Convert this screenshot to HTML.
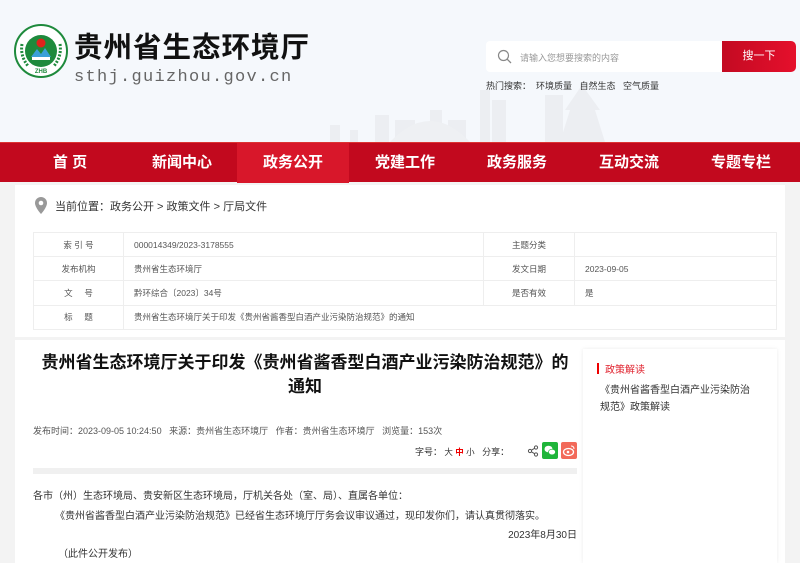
<!DOCTYPE html>
<html><head><meta charset="utf-8"><style>
*{margin:0;padding:0;box-sizing:border-box}
body{width:800px;height:563px;overflow:hidden;background:#f3f3f3;font-family:"Liberation Sans","Noto Sans CJK SC",sans-serif;position:relative;color:#333}
.a{position:absolute}
.hdr{left:0;top:0;width:800px;height:142px;background:#f5f8fc}
.nav{left:0;top:142px;width:800px;height:40px;background:#c2091e;border-top:1px solid #d33;}
.nav span{position:absolute;top:0;width:112px;height:40px;line-height:40px;text-align:center;color:#fff;font-weight:bold;font-size:15px}
.card{background:#fff}
table{border-collapse:collapse;font-size:8.5px;color:#555}
td{border:1px solid #eee;height:24.2px;padding-left:10px}
td.l{text-align:center;padding:0}
.p{font-size:10px;color:#333}
</style></head><body>
<div class="a hdr"></div>
<svg class="a" style="left:320px;top:70px" width="300" height="72">
<g fill="#eceef2">
<rect x="10" y="55" width="10" height="17"/><rect x="30" y="60" width="8" height="12"/><rect x="55" y="45" width="14" height="27"/><rect x="75" y="50" width="20" height="22"/><rect x="110" y="40" width="12" height="32"/><rect x="128" y="50" width="18" height="22"/><rect x="160" y="20" width="10" height="52"/><rect x="172" y="30" width="14" height="42"/><rect x="225" y="25" width="18" height="47"/>
<path d="M240 72 L250 40 L275 40 L285 72Z"/><path d="M245 40 L262 15 L280 40Z"/>
</g>
<path d="M70 72 Q110 30 150 72Z" fill="#eef0f3"/>
</svg>
<svg class="a" style="left:14px;top:24px" width="54" height="54" viewBox="0 0 54 54">
<circle cx="27" cy="27" r="26" fill="#fff" stroke="#1e8a3c" stroke-width="2"/>
<circle cx="27" cy="27" r="16" fill="#1e8a3c"/>
<circle cx="27" cy="19" r="4.5" fill="#e0231c"/>
<path d="M17 33 L23 25 L27 30 L31 24 L37 33Z" fill="#3aa0d8"/>
<rect x="18" y="33" width="18" height="3" fill="#fff"/>
<path d="M8 20 Q6 32 14 42 M46 20 Q48 32 40 42" stroke="#1e8a3c" stroke-width="3" fill="none" stroke-dasharray="2 1.5"/>
<text x="27" y="49" font-size="6" font-weight="bold" fill="#1e8a3c" text-anchor="middle" font-family="Liberation Sans">ZHB</text>
</svg>
<div class="a" style="left:74px;top:30px;font-size:28.5px;font-weight:bold;color:#111;letter-spacing:1px;line-height:36px">贵州省生态环境厅</div>
<div class="a" style="left:74px;top:68px;font-size:17px;color:#666;font-family:'Liberation Mono',monospace;letter-spacing:1.3px">sthj.guizhou.gov.cn</div>
<div class="a" style="left:486px;top:41px;width:236px;height:31px;background:#fff;border-radius:4px 0 0 4px"></div>
<svg class="a" style="left:497px;top:49px" width="15" height="15"><circle cx="6.5" cy="6.5" r="5" stroke="#888" fill="none" stroke-width="1.2"/><path d="M10 10 L14 14" stroke="#888" stroke-width="1.3"/></svg>
<div class="a" style="left:520px;top:51px;font-size:9px;color:#999">请输入您想要搜索的内容</div>
<div class="a" style="left:722px;top:41px;width:74px;height:31px;background:linear-gradient(90deg,#c30a22,#e5102c);border-radius:0 5px 5px 0;color:#fff;font-size:11px;text-align:center;line-height:31px">搜一下</div>
<div class="a" style="left:486px;top:79px;font-size:9px;color:#333">热门搜索：&nbsp;&nbsp;环境质量&nbsp;&nbsp;&nbsp;自然生态&nbsp;&nbsp;&nbsp;空气质量</div>
<div class="a nav">
<span style="left:237px;width:112px;background:#d8172a"></span>
<span style="left:14px">首 页</span><span style="left:126px">新闻中心</span><span style="left:237px">政务公开</span><span style="left:349px">党建工作</span><span style="left:461px">政务服务</span><span style="left:573px">互动交流</span><span style="left:685px">专题专栏</span>
</div>
<div class="a card" style="left:15px;top:185px;width:770px;height:152px"></div>
<svg class="a" style="left:35px;top:197px" width="12" height="17"><path d="M6 0C2.7 0 0 2.7 0 6c0 4.5 6 11 6 11s6-6.5 6-11C12 2.7 9.3 0 6 0z" fill="#999"/><circle cx="6" cy="6" r="2.3" fill="#fff"/></svg>
<div class="a" style="left:55px;top:198px;font-size:11px;color:#333">当前位置：政务公开 &gt; 政策文件 &gt; 厅局文件</div>
<table class="a" style="left:33px;top:232px;width:744px">
<tr><td class="l" style="width:90px">索 引 号</td><td style="width:360px">000014349/2023-3178555</td><td class="l" style="width:91px">主题分类</td><td></td></tr>
<tr><td class="l">发布机构</td><td>贵州省生态环境厅</td><td class="l">发文日期</td><td>2023-09-05</td></tr>
<tr><td class="l">文&nbsp;&nbsp;&nbsp;&nbsp;&nbsp;号</td><td>黔环综合〔2023〕34号</td><td class="l">是否有效</td><td>是</td></tr>
<tr><td class="l">标&nbsp;&nbsp;&nbsp;&nbsp;&nbsp;题</td><td colspan="3">贵州省生态环境厅关于印发《贵州省酱香型白酒产业污染防治规范》的通知</td></tr>
</table>
<div class="a card" style="left:15px;top:340px;width:770px;height:223px"></div>
<div class="a" style="left:30px;top:351px;width:550px;text-align:center;font-size:17px;font-weight:bold;line-height:24px;color:#111">贵州省生态环境厅关于印发《贵州省酱香型白酒产业污染防治规范》的<br>通知</div>
<div class="a" style="left:33px;top:424px;font-size:9px;color:#555">发布时间：2023-09-05 10:24:50&nbsp;&nbsp;&nbsp;来源：贵州省生态环境厅&nbsp;&nbsp;&nbsp;作者：贵州省生态环境厅&nbsp;&nbsp;&nbsp;浏览量：153次</div>
<div class="a" style="left:415px;top:445px;font-size:9px;color:#333">字号：<span style="font-size:8.5px">&nbsp;大 <b style="color:#e00">中</b> 小</span>&nbsp;&nbsp;&nbsp;分享：</div>
<svg class="a" style="left:527px;top:445px" width="12" height="12"><circle cx="3" cy="6" r="1.6" fill="none" stroke="#555"/><circle cx="9" cy="2.5" r="1.6" fill="none" stroke="#555"/><circle cx="9" cy="9.5" r="1.6" fill="none" stroke="#555"/><path d="M4.4 5.2L7.6 3.3M4.4 6.8L7.6 8.7" stroke="#555"/></svg>
<div class="a" style="left:542px;top:442px;width:16px;height:17px;background:#1fb53a;border-radius:2px"><svg width="16" height="17"><ellipse cx="6.5" cy="7" rx="4" ry="3.3" fill="#fff"/><ellipse cx="10" cy="10" rx="3.5" ry="2.8" fill="#fff" stroke="#1fb53a" stroke-width=".6"/></svg></div>
<div class="a" style="left:561px;top:442px;width:16px;height:17px;background:#f26a5a;border-radius:2px"><svg width="16" height="17"><ellipse cx="7.5" cy="10" rx="5" ry="3.5" fill="none" stroke="#fff" stroke-width="1.3"/><circle cx="7" cy="10" r="1.3" fill="#fff"/><path d="M10 4 Q13 4 13 7" stroke="#fff" fill="none"/></svg></div>
<div class="a" style="left:33px;top:468px;width:544px;height:6px;background:#f0f0f0"></div>
<div class="a p" style="left:33px;top:487px">各市（州）生态环境局、贵安新区生态环境局，厅机关各处（室、局）、直属各单位：</div>
<div class="a p" style="left:55px;top:507px">《贵州省酱香型白酒产业污染防治规范》已经省生态环境厅厅务会议审议通过，现印发你们，请认真贯彻落实。</div>
<div class="a p" style="left:480px;top:526px;width:97px;text-align:right">2023年8月30日</div>
<div class="a p" style="left:58px;top:545px">（此件公开发布）</div>
<div class="a" style="left:583px;top:349px;width:194px;height:214px;background:#fff;box-shadow:0 0 4px rgba(0,0,0,.08)"></div>
<div class="a" style="left:597px;top:363px;width:2px;height:11px;background:#e00"></div>
<div class="a" style="left:605px;top:361px;font-size:10px;color:#e0222e">政策解读</div>
<div class="a" style="left:600px;top:382px;width:158px;font-size:10px;line-height:17px;color:#333">《贵州省酱香型白酒产业污染防治规范》政策解读</div>
</body></html>
